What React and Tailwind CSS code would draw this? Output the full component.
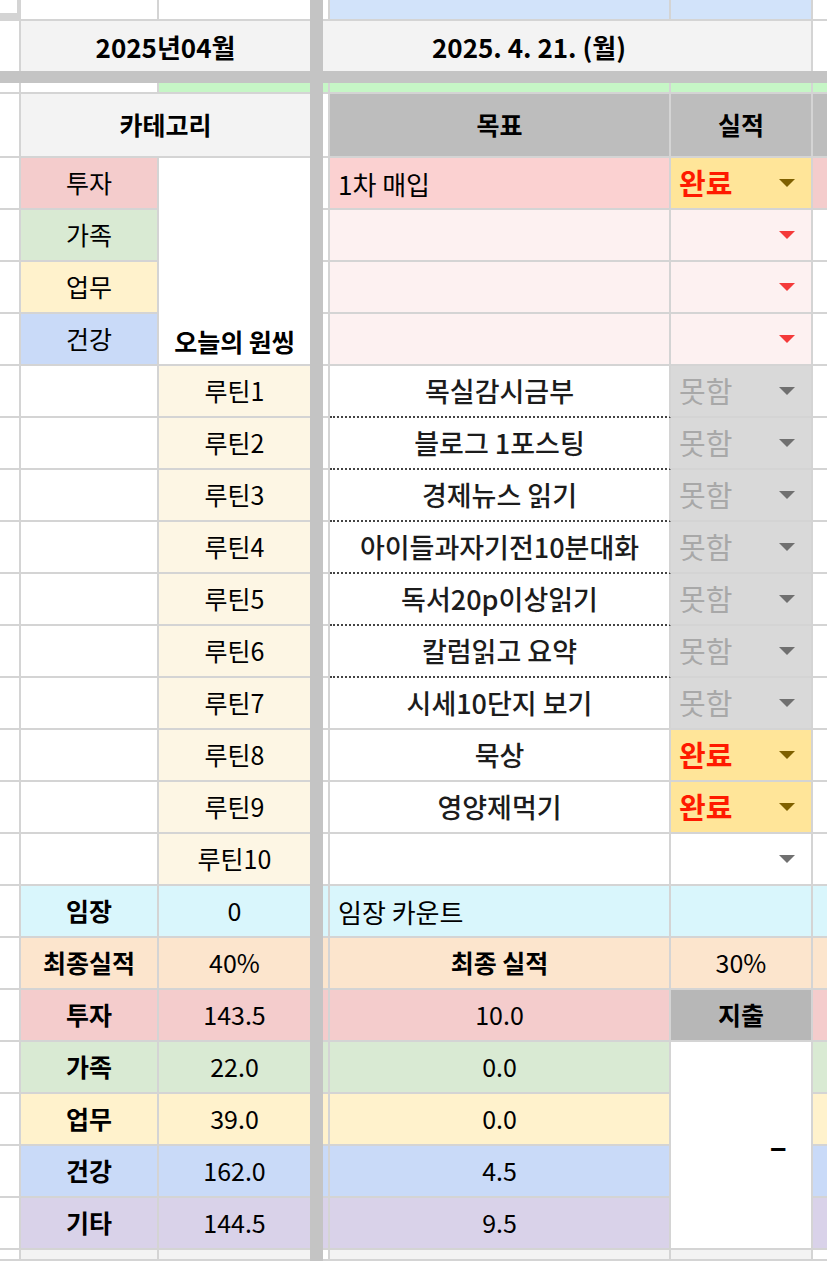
import clsx from "clsx";
import { twMerge } from "tailwind-merge";

const cats = [
  { name: "투자", bg: "bg-[#f4cccc]" },
  { name: "가족", bg: "bg-[#d9ead3]" },
  { name: "업무", bg: "bg-[#fff2cc]" },
  { name: "건강", bg: "bg-[#c9daf8]" },
];

const routines = [
  { label: "루틴1", task: "목실감시금부", status: "fail", dotted: true },
  { label: "루틴2", task: "블로그 1포스팅", status: "fail", dotted: true },
  { label: "루틴3", task: "경제뉴스 읽기", status: "fail", dotted: true },
  { label: "루틴4", task: "아이들과자기전10분대화", status: "fail", dotted: true },
  { label: "루틴5", task: "독서20p이상읽기", status: "fail", dotted: true },
  { label: "루틴6", task: "칼럼읽고 요약", status: "fail", dotted: true },
  { label: "루틴7", task: "시세10단지 보기", status: "fail" },
  { label: "루틴8", task: "묵상", status: "done" },
  { label: "루틴9", task: "영양제먹기", status: "done" },
  { label: "루틴10", task: "", status: "empty" },
];

const totals = [
  { name: "투자", bg: "bg-[#f4cccc]", all: "143.5", today: "10.0" },
  { name: "가족", bg: "bg-[#d9ead3]", all: "22.0", today: "0.0" },
  { name: "업무", bg: "bg-[#fff2cc]", all: "39.0", today: "0.0" },
  { name: "건강", bg: "bg-[#c9daf8]", all: "162.0", today: "4.5" },
  { name: "기타", bg: "bg-[#d9d2e9]", all: "144.5", today: "9.5" },
];

function Cell({ className, children, r = true, b = true }) {
  return (
    <div
      className={twMerge(
        clsx(
          "flex items-center justify-center overflow-hidden whitespace-nowrap border-[#d4d4d4]",
          r && "border-r-2",
          b && "border-b-2",
          className
        )
      )}
    >
      {children}
    </div>
  );
}

function Arrow({ color }) {
  return (
    <svg width="16" height="8" viewBox="0 0 16 8" className="shrink-0">
      <polygon points="0,0 16,0 8,8" fill={color} />
    </svg>
  );
}

function Status({ kind }) {
  if (kind === "done")
    return (
      <Cell className="bg-[#ffe599] justify-between pl-[8px] pr-[16px]">
        <span className="text-[29px] font-bold text-[#ff1a00]">완료</span>
        <Arrow color="#7f6000" />
      </Cell>
    );
  if (kind === "fail")
    return (
      <Cell className="bg-[#d9d9d9] justify-between pl-[8px] pr-[16px]">
        <span className="text-[29px] text-[#a8a8a8]">못함</span>
        <Arrow color="#707070" />
      </Cell>
    );
  if (kind === "red")
    return (
      <Cell className="bg-[#fdf1f1] justify-end pr-[16px]">
        <Arrow color="#f43a3a" />
      </Cell>
    );
  return (
    <Cell className="bg-white justify-end pr-[16px]">
      <Arrow color="#707070" />
    </Cell>
  );
}

export default function App() {
  return (
    <div className="w-[827px] h-[1261px] overflow-hidden bg-white flex flex-col font-['Noto_Sans_CJK_KR',sans-serif] text-black">
      {/* frozen top rows */}
      <div className="flex h-[71px] shrink-0">
        <div className="grid w-[310px] grid-cols-[21px_138px_151px] grid-rows-[21px_50px]">
          <div className="border-r-4 border-b-8 border-[#d4d4d4] bg-white" />
          <Cell className="bg-white" />
          <Cell r={false} className="bg-white" />
          <Cell b={false} className="bg-white" />
          <Cell r={false} b={false} className="col-span-2 bg-[#f3f3f3] text-[26px] font-bold">
            2025년04월
          </Cell>
        </div>
        <div className="w-[13px] shrink-0 bg-[#c4c4c4]" />
        <div className="grid flex-1 grid-cols-[7px_341px_142px_1fr] grid-rows-[21px_50px]">
          <Cell className="bg-white" />
          <Cell className="bg-[#d2e3fa]" />
          <Cell className="bg-[#d2e3fa]" />
          <Cell r={false} className="bg-white" />
          <Cell b={false} className="col-span-3 bg-[#f3f3f3] justify-start pl-[109px] text-[26px] font-bold">
            2025. 4. 21. (월)
          </Cell>
          <Cell r={false} b={false} className="bg-white" />
        </div>
      </div>

      <div className="h-[12px] shrink-0 bg-[#c4c4c4]" />

      {/* scrolling area */}
      <div className="flex flex-1">
        <div className="grid w-[310px] grid-cols-[21px_138px_151px] grid-rows-[11px_64px_repeat(21,52px)_1fr] text-[25px]">
          <Cell className="bg-white" />
          <Cell className="bg-white" />
          <Cell r={false} className="bg-[#c6f6c6]" />

          <Cell className="bg-white" />
          <Cell r={false} className="col-span-2 bg-[#f3f3f3] font-bold">카테고리</Cell>

          <Cell className="bg-white" />
          <Cell className={cats[0].bg}>{cats[0].name}</Cell>
          <Cell r={false} className="row-span-4 bg-white items-end pb-[4px] font-bold">
            오늘의 원씽
          </Cell>
          {cats.slice(1).map((c) => (
            <div key={c.name} className="contents">
              <Cell className="bg-white" />
              <Cell className={c.bg}>{c.name}</Cell>
            </div>
          ))}

          {routines.map((r) => (
            <div key={r.label} className="contents">
              <Cell className="bg-white" />
              <Cell className="bg-white" />
              <Cell r={false} className="bg-[#fdf6e4]">{r.label}</Cell>
            </div>
          ))}

          <Cell className="bg-white" />
          <Cell className="bg-[#d9f6fc] font-bold">임장</Cell>
          <Cell r={false} className="bg-[#d9f6fc]">0</Cell>

          <Cell className="bg-white" />
          <Cell className="bg-[#fce5cd] font-bold">최종실적</Cell>
          <Cell r={false} className="bg-[#fce5cd]">40%</Cell>

          {totals.map((t) => (
            <div key={t.name} className="contents">
              <Cell className="bg-white" />
              <Cell className={clsx(t.bg, "font-bold")}>{t.name}</Cell>
              <Cell r={false} className={t.bg}>{t.all}</Cell>
            </div>
          ))}

          <Cell className="bg-white" />
          <Cell className="bg-[#f3f3f3]" />
          <Cell r={false} className="bg-[#f3f3f3]" />
        </div>

        <div className="w-[13px] shrink-0 bg-[#c4c4c4]" />

        <div className="grid flex-1 grid-cols-[7px_341px_142px_1fr] grid-rows-[11px_64px_repeat(21,52px)_1fr] text-[25px]">
          <Cell className="bg-[#c6f6c6]" />
          <Cell className="bg-[#c6f6c6]" />
          <Cell className="bg-[#c6f6c6]" />
          <Cell r={false} className="bg-[#c6f6c6]" />

          <Cell className="bg-white" />
          <Cell className="bg-[#bdbdbd] font-bold">목표</Cell>
          <Cell className="bg-[#bdbdbd] font-bold">실적</Cell>
          <Cell r={false} className="bg-[#bdbdbd]" />

          <Cell className="bg-white" />
          <Cell className="bg-[#fbd1d1] justify-start pl-[8px] text-[26px]">1차 매입</Cell>
          <Status kind="done" />
          <Cell r={false} className="bg-[#f4cccc]" />
          {cats.slice(1).map((c) => (
            <div key={c.name} className="contents">
              <Cell className="bg-white" />
              <Cell className="bg-[#fdf1f1]" />
              <Status kind="red" />
              <Cell r={false} className="bg-white" />
            </div>
          ))}

          {routines.map((r) => (
            <div key={r.label} className="contents">
              <Cell className="bg-white" />
              <Cell
                className={clsx(
                  "bg-white text-[27px] font-medium text-[#1c1c1c]",
                  r.dotted && "[border-bottom-style:dotted] border-b-[#444]"
                )}
              >
                {r.task}
              </Cell>
              <Status kind={r.status} />
              <Cell r={false} className="bg-white" />
            </div>
          ))}

          <Cell className="bg-[#d9f6fc]" />
          <Cell className="bg-[#d9f6fc] justify-start pl-[8px] text-[26px]">임장 카운트</Cell>
          <Cell className="bg-[#d9f6fc]" />
          <Cell r={false} className="bg-[#d9f6fc]" />

          <Cell className="bg-[#fce5cd]" />
          <Cell className="bg-[#fce5cd] font-bold">최종 실적</Cell>
          <Cell className="bg-[#fce5cd]">30%</Cell>
          <Cell r={false} className="bg-[#fce5cd]" />

          <Cell className={totals[0].bg} />
          <Cell className={totals[0].bg}>{totals[0].today}</Cell>
          <Cell className="bg-[#b7b7b7] font-bold">지출</Cell>
          <Cell r={false} className={totals[0].bg} />

          <Cell className={totals[1].bg} />
          <Cell className={totals[1].bg}>{totals[1].today}</Cell>
          <Cell className="row-span-4 bg-white justify-end pr-[24px] text-[32px] font-bold">–</Cell>
          <Cell r={false} className={totals[1].bg} />
          {totals.slice(2).map((t) => (
            <div key={t.name} className="contents">
              <Cell className={t.bg} />
              <Cell className={t.bg}>{t.today}</Cell>
              <Cell r={false} className={t.bg} />
            </div>
          ))}

          <Cell className="bg-white" />
          <Cell className="bg-[#f3f3f3]" />
          <Cell className="bg-[#f3f3f3]" />
          <Cell r={false} className="bg-white" />
        </div>
      </div>
    </div>
  );
}
